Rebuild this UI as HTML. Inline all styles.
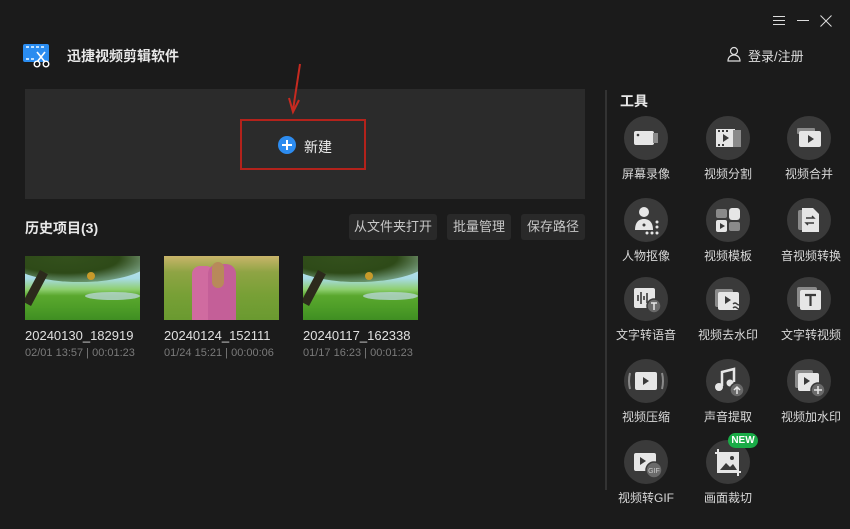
<!DOCTYPE html>
<html><head><meta charset="utf-8"><style>
*{margin:0;padding:0;box-sizing:border-box}
body{width:850px;height:529px;background:#1b1b1b;font-family:"Liberation Sans","Noto Sans CJK SC",sans-serif;color:#e6e6e6;position:relative;overflow:hidden}
.a{position:absolute}
.btn{position:absolute;top:214px;height:26px;background:#292929;border-radius:3px;font-size:13px;color:#c8c8c8;line-height:26px;text-align:center}
.th{position:absolute;top:256px;width:115px;height:64px;overflow:hidden}
.tree{background:linear-gradient(180deg,#cfeaf0 0%,#a8dbe6 35%,#8fcf70 52%,#5aa82e 62%,#4e9e28 80%,#3f8e22 100%)}
.tree .can{position:absolute;left:-15px;top:-18px;width:140px;height:44px;border-radius:50%;background:radial-gradient(ellipse at 40% 45%,#33501c 0%,#2e4a18 45%,rgba(60,95,35,.6) 70%,transparent 100%)}
.tree .trunk{position:absolute;left:6px;top:14px;width:9px;height:36px;background:#2c2a1c;transform:rotate(28deg)}
.tree .river{position:absolute;left:60px;top:36px;width:55px;height:8px;background:#b7d6d2;border-radius:50%;opacity:.8}
.girl{background:linear-gradient(180deg,#c9b56a 0%,#8fa444 25%,#78a036 60%,#6a9a30 100%)}
.lbl{position:absolute;font-size:12px;color:#d8d8d8;width:80px;text-align:center}
.c{position:absolute;width:44px;height:44px;border-radius:50%;background:#3a3a3a}
.c svg{position:absolute;left:0;top:0}
</style></head><body>
<!-- window controls -->
<div class="a" style="left:773px;top:16px;width:12px;height:1px;background:#ddd;box-shadow:0 4px 0 #ddd,0 8px 0 #ddd"></div>
<div class="a" style="left:797px;top:20px;width:12px;height:1px;background:#ddd"></div>
<svg class="a" style="left:820px;top:15px" width="12" height="12"><path d="M0.5 0.5L11.5 11.5M11.5 0.5L0.5 11.5" stroke="#ddd" stroke-width="1"/></svg>
<!-- logo -->
<svg class="a" style="left:23px;top:44px" width="30" height="24"><rect x="0" y="0" width="26" height="18" rx="2" fill="#2a8cf0"/><g fill="#bfe0ff"><rect x="3" y="2" width="3" height="2"/><rect x="8" y="2" width="3" height="2"/><rect x="13" y="2" width="3" height="2"/><rect x="18" y="2" width="3" height="2"/><rect x="3" y="14" width="3" height="2"/><rect x="8" y="14" width="3" height="2"/></g><path d="M14 8L22 18M22 8L14 18" stroke="#fff" stroke-width="1.6"/><circle cx="14" cy="20" r="2.8" fill="#1b1b1b" stroke="#fff" stroke-width="1.4"/><circle cx="23" cy="20" r="2.8" fill="#1b1b1b" stroke="#fff" stroke-width="1.4"/></svg>
<div class="a" style="left:67px;top:46px;font-size:14px;font-weight:bold;color:#e8e8e8">迅捷视频剪辑软件</div>
<svg class="a" style="left:727px;top:46px" width="14" height="16"><circle cx="7" cy="5" r="3.5" fill="none" stroke="#ddd" stroke-width="1.2"/><path d="M1 15c0-4 3-6 6-6s6 2 6 6z" fill="none" stroke="#ddd" stroke-width="1.2"/></svg>
<div class="a" style="left:748px;top:46px;font-size:13px;color:#ddd">登录/注册</div>
<!-- new area -->
<div class="a" style="left:25px;top:89px;width:560px;height:110px;background:#2b2b2b"></div>
<div class="a" style="left:240px;top:119px;width:126px;height:51px;border:2px solid #b3221b"></div>
<svg class="a" style="left:288px;top:62px" width="16" height="54"><path d="M12 2L5 48" stroke="#c62a20" stroke-width="2"/><path d="M1 36L5 50L11 38" fill="none" stroke="#c62a20" stroke-width="2"/></svg>
<div class="a" style="left:278px;top:136px;width:18px;height:18px;border-radius:50%;background:#2d8cf0"></div>
<div class="a" style="left:282px;top:144px;width:10px;height:1.6px;background:#fff"></div>
<div class="a" style="left:286.2px;top:140px;width:1.6px;height:10px;background:#fff"></div>
<div class="a" style="left:304px;top:137px;font-size:14px;color:#eee">新建</div>
<!-- history -->
<div class="a" style="left:25px;top:218px;font-size:14px;font-weight:bold;color:#e8e8e8">历史项目(3)</div>
<div class="btn" style="left:349px;width:88px">从文件夹打开</div>
<div class="btn" style="left:447px;width:64px">批量管理</div>
<div class="btn" style="left:521px;width:64px">保存路径</div>
<div class="th tree" style="left:25px"><div class="river"></div><div class="can"></div><div class="trunk"></div><div class="a" style="left:62px;top:16px;width:8px;height:8px;border-radius:50%;background:#c79a2a"></div></div>
<div class="th girl" style="left:164px"><div class="a" style="left:28px;top:10px;width:22px;height:54px;background:#d06ba0;border-radius:8px 8px 0 0"></div><div class="a" style="left:44px;top:8px;width:28px;height:56px;background:#c45f98;border-radius:10px 10px 0 0"></div><div class="a" style="left:48px;top:6px;width:12px;height:26px;background:#b88a5a;border-radius:6px"></div></div>
<div class="th tree" style="left:303px"><div class="river"></div><div class="can"></div><div class="trunk"></div><div class="a" style="left:62px;top:16px;width:8px;height:8px;border-radius:50%;background:#c79a2a"></div></div>
<div class="a" style="left:25px;top:328px;font-size:13px;color:#e0e0e0">20240130_182919</div>
<div class="a" style="left:25px;top:347px;font-size:11px;color:#7a7a7a">02/01 13:57 | 00:01:23</div>
<div class="a" style="left:164px;top:328px;font-size:13px;color:#e0e0e0">20240124_152111</div>
<div class="a" style="left:164px;top:347px;font-size:11px;color:#7a7a7a">01/24 15:21 | 00:00:06</div>
<div class="a" style="left:303px;top:328px;font-size:13px;color:#e0e0e0">20240117_162338</div>
<div class="a" style="left:303px;top:347px;font-size:11px;color:#7a7a7a">01/17 16:23 | 00:01:23</div>
<!-- divider -->
<div class="a" style="left:605px;top:90px;width:2px;height:400px;background:#333"></div>
<div class="a" style="left:620px;top:91px;font-size:14px;font-weight:bold;color:#e8e8e8">工具</div>
<!-- tools -->
<div class="c" style="left:624px;top:116px"><svg width="44" height="44"><rect x="10" y="15" width="20" height="14" rx="2" fill="#e6e6e6"/><rect x="29" y="17" width="5" height="10" fill="#8a8a8a"/><circle cx="14" cy="19" r="1.3" fill="#3a3a3a"/></svg></div>
<div class="c" style="left:706px;top:116px"><svg width="44" height="44"><rect x="10" y="13" width="19" height="18" fill="#e6e6e6"/><rect x="27" y="14" width="8" height="17" fill="#8a8a8a"/><g fill="#3a3a3a"><rect x="12" y="14" width="2" height="2"/><rect x="16" y="14" width="2" height="2"/><rect x="20" y="14" width="2" height="2"/><rect x="12" y="28" width="2" height="2"/><rect x="16" y="28" width="2" height="2"/></g><path d="M17 18v8l6-4z" fill="#3a3a3a"/></svg></div>
<div class="c" style="left:787px;top:116px"><svg width="44" height="44"><rect x="10" y="12" width="18" height="6" rx="1" fill="#8a8a8a"/><rect x="12" y="15" width="22" height="16" rx="2" fill="#e6e6e6"/><path d="M21 19v8l6-4z" fill="#3a3a3a"/></svg></div>
<div class="lbl" style="left:606px;top:165px">屏幕录像</div>
<div class="lbl" style="left:688px;top:165px">视频分割</div>
<div class="lbl" style="left:769px;top:165px">视频合并</div>

<div class="c" style="left:624px;top:198px"><svg width="44" height="44"><circle cx="20" cy="14" r="5" fill="#e6e6e6"/><path d="M11 32c0-8 4-11 9-11s9 3 9 11z" fill="#e6e6e6"/><g fill="#e6e6e6"><circle cx="33" cy="24" r="1.5"/><circle cx="33" cy="29" r="1.5"/><circle cx="28" cy="35" r="1.5"/><circle cx="33" cy="35" r="1.5"/><circle cx="23" cy="35" r="1.5"/></g><circle cx="20" cy="27" r="1.5" fill="#3a3a3a"/></svg></div>
<div class="c" style="left:706px;top:198px"><svg width="44" height="44"><rect x="10" y="11" width="11" height="9" rx="2" fill="#8a8a8a"/><rect x="23" y="10" width="11" height="12" rx="3" fill="#e6e6e6"/><rect x="10" y="22" width="11" height="12" rx="2" fill="#e6e6e6"/><rect x="23" y="24" width="11" height="9" rx="2" fill="#8a8a8a"/><path d="M14 25v6l5-3z" fill="#3a3a3a"/></svg></div>
<div class="c" style="left:787px;top:198px"><svg width="44" height="44"><rect x="11" y="12" width="14" height="20" rx="2" fill="#8a8a8a"/><path d="M15 10h11l6 6v18h-17z" fill="#e6e6e6"/><path d="M19 20h8l-2-2M27 25h-8l2 2" stroke="#3a3a3a" stroke-width="1.4" fill="none"/></svg></div>
<div class="lbl" style="left:606px;top:247px">人物抠像</div>
<div class="lbl" style="left:688px;top:247px">视频模板</div>
<div class="lbl" style="left:769px;top:247px;width:84px">音视频转换</div>

<div class="c" style="left:624px;top:277px"><svg width="44" height="44"><rect x="10" y="11" width="21" height="20" rx="2" fill="#e6e6e6"/><g stroke="#3a3a3a" stroke-width="1.6"><path d="M14 18v6M17 15v12M20 19v4M23 16v10"/></g><circle cx="30" cy="29" r="7" fill="#6a6a6a" stroke="#3a3a3a" stroke-width="1.5"/><path d="M27 26h6M30 26v7" stroke="#e6e6e6" stroke-width="1.5"/></svg></div>
<div class="c" style="left:706px;top:277px"><svg width="44" height="44"><rect x="9" y="12" width="18" height="18" rx="2" fill="#8a8a8a"/><rect x="12" y="15" width="21" height="18" rx="2" fill="#e6e6e6"/><path d="M19 19v8l6-4z" fill="#3a3a3a"/><path d="M27 27q2-2 4 0t4 0M27 31q2-2 4 0t4 0" stroke="#3a3a3a" stroke-width="1.3" fill="none"/></svg></div>
<div class="c" style="left:787px;top:277px"><svg width="44" height="44"><rect x="10" y="10" width="20" height="20" rx="2" fill="#8a8a8a"/><rect x="13" y="13" width="21" height="20" rx="2" fill="#e6e6e6"/><path d="M18 18h11M23.5 18v11" stroke="#3a3a3a" stroke-width="2.2"/></svg></div>
<div class="lbl" style="left:606px;top:326px">文字转语音</div>
<div class="lbl" style="left:688px;top:326px">视频去水印</div>
<div class="lbl" style="left:769px;top:326px;width:84px">文字转视频</div>

<div class="c" style="left:624px;top:359px"><svg width="44" height="44"><path d="M6 14q-2 8 0 16M38 14q2 8 0 16" stroke="#8a8a8a" stroke-width="2" fill="none"/><rect x="11" y="13" width="22" height="18" rx="2" fill="#e6e6e6"/><path d="M19 18v8l6-4z" fill="#3a3a3a"/></svg></div>
<div class="c" style="left:706px;top:359px"><svg width="44" height="44"><path d="M16 27V13l12-3v13" stroke="#e6e6e6" stroke-width="2.5" fill="none"/><circle cx="13" cy="28" r="4" fill="#e6e6e6"/><circle cx="24" cy="24" r="3.5" fill="#e6e6e6"/><circle cx="31" cy="31" r="7" fill="#6a6a6a" stroke="#3a3a3a" stroke-width="1.5"/><path d="M31 35v-7M28 31l3-3 3 3" stroke="#e6e6e6" stroke-width="1.5" fill="none"/></svg></div>
<div class="c" style="left:787px;top:359px"><svg width="44" height="44"><rect x="8" y="11" width="18" height="18" rx="2" fill="#8a8a8a"/><rect x="11" y="14" width="21" height="18" rx="2" fill="#e6e6e6"/><path d="M17 18v8l6-4z" fill="#3a3a3a"/><circle cx="31" cy="31" r="7" fill="#6a6a6a" stroke="#3a3a3a" stroke-width="1.5"/><path d="M27 31h8M31 27v8" stroke="#e6e6e6" stroke-width="1.5"/></svg></div>
<div class="lbl" style="left:606px;top:408px">视频压缩</div>
<div class="lbl" style="left:688px;top:408px">声音提取</div>
<div class="lbl" style="left:769px;top:408px;width:84px">视频加水印</div>

<div class="c" style="left:624px;top:440px"><svg width="44" height="44"><rect x="10" y="13" width="22" height="18" rx="2" fill="#e6e6e6"/><path d="M16 17v8l6-4z" fill="#3a3a3a"/><circle cx="30" cy="30" r="8" fill="#6a6a6a" stroke="#3a3a3a" stroke-width="1.5"/><text x="30" y="33" font-size="7" fill="#ccc" text-anchor="middle" font-family="Liberation Sans">GIF</text></svg></div>
<div class="c" style="left:706px;top:440px"><svg width="44" height="44"><path d="M12 9v23h23M9 13h23v23" stroke="#e6e6e6" stroke-width="2" fill="none"/><rect x="13" y="14" width="18" height="17" fill="#e6e6e6"/><path d="M14 30l6-7 4 4 3-3 4 6z" fill="#3a3a3a"/><circle cx="26" cy="18" r="2" fill="#3a3a3a"/></svg></div>
<div class="a" style="left:728px;top:433px;width:30px;height:15px;border-radius:8px;background:#1aab47;font-size:10px;font-weight:bold;color:#fff;text-align:center;line-height:15px">NEW</div>
<div class="lbl" style="left:606px;top:489px">视频转GIF</div>
<div class="lbl" style="left:688px;top:489px">画面裁切</div>
</body></html>
